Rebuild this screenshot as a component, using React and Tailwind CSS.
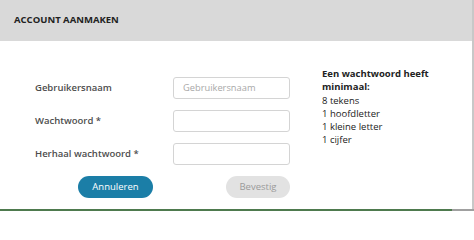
import React from "react";

export default function App() {
  const font = { fontFamily: '"Open Sans", "Liberation Sans", sans-serif' };
  return (
    <div className="w-[474px] h-[211px] flex flex-col bg-white overflow-hidden" style={font}>
      <div className="flex flex-1 min-h-0">
        <div className="flex-1 flex flex-col">
          <div className="h-[41px] bg-[#d9d9d9] flex items-center pl-[14px]">
            <span className="text-[9.5px] font-bold text-[#222]">ACCOUNT AANMAKEN</span>
          </div>
          <div className="flex-1 flex pt-[36px]">
            <div className="flex flex-col">
              <div className="flex flex-col gap-[11px]">
                {[
                  ["Gebruikersnaam", "Gebruikersnaam"],
                  ["Wachtwoord *", ""],
                  ["Herhaal wachtwoord *", ""],
                ].map(([label, ph]) => (
                  <div key={label} className="flex items-center h-[22px]">
                    <div className="w-[173px] pl-[35px] text-[9.5px] font-semibold text-[#4d4d4d] whitespace-nowrap">
                      {label}
                    </div>
                    <div className="w-[117px] h-[22px] border border-[#d4d4d4] rounded-[3px] flex items-center pl-[9px] text-[9.3px] text-[#a8a8a8]">
                      {ph}
                    </div>
                  </div>
                ))}
              </div>
              <div className="flex mt-[11px] pl-[78px] gap-[73px]">
                <button className="w-[75px] h-[22px] rounded-full bg-[#1b7ea7] text-white text-[9.5px] flex items-center justify-center">
                  Annuleren
                </button>
                <button className="w-[64px] h-[22px] rounded-full bg-[#e2e2e2] text-[#9a9a9a] text-[9.5px] flex items-center justify-center">
                  Bevestig
                </button>
              </div>
            </div>
            <div className="ml-[32px] -mt-[10px] text-[9.5px] leading-[13.3px] text-[#222]">
              <div className="font-bold">Een wachtwoord heeft</div>
              <div className="font-bold">minimaal:</div>
              <div>8 tekens</div>
              <div>1 hoofdletter</div>
              <div>1 kleine letter</div>
              <div>1 cijfer</div>
            </div>
          </div>
        </div>
        <div className="w-[2px] bg-[#c8c8c8]" />
      </div>
      <div className="h-[2px] flex">
        <div className="w-[452px] bg-[#4e7a4e]" />
        <div className="flex-1 bg-[#a0a0a0]" />
      </div>
    </div>
  );
}
